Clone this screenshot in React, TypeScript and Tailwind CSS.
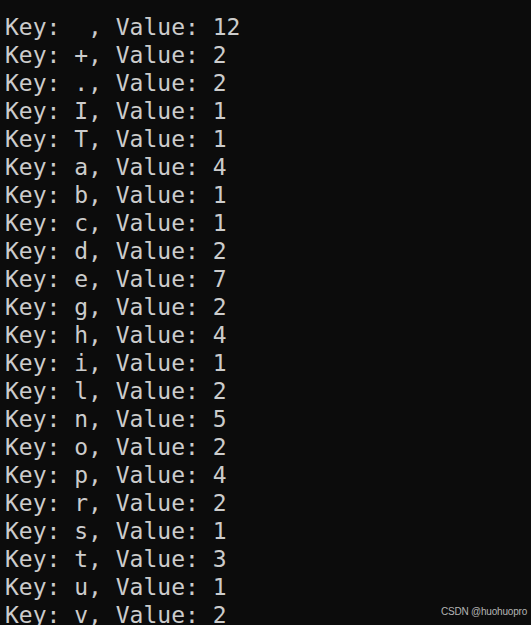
import React from 'react';

const rows: [string, number][] = [
  [' ', 12],
  ['+', 2],
  ['.', 2],
  ['I', 1],
  ['T', 1],
  ['a', 4],
  ['b', 1],
  ['c', 1],
  ['d', 2],
  ['e', 7],
  ['g', 2],
  ['h', 4],
  ['i', 1],
  ['l', 2],
  ['n', 5],
  ['o', 2],
  ['p', 4],
  ['r', 2],
  ['s', 1],
  ['t', 3],
  ['u', 1],
  ['v', 2],
];

const App: React.FC = () => {
  return (
    <div className="relative w-[531px] h-[625px] overflow-hidden bg-[#0c0c0c]">
      <div className="flex flex-col pt-[13px] pl-[5px] font-['DejaVu_Sans_Mono',monospace] text-[23px] leading-[28px] text-[#cccccc] whitespace-pre">
        {rows.map(([k, v], i) => (
          <div key={i}>{`Key: ${k}, Value: ${v}`}</div>
        ))}
      </div>
      <span className="absolute right-[4px] bottom-[6px] font-['Liberation_Sans',Arial,sans-serif] text-[10px] tracking-[-0.2px] text-[#b4b4b4]">
        CSDN @huohuopro
      </span>
    </div>
  );
};

export default App;
